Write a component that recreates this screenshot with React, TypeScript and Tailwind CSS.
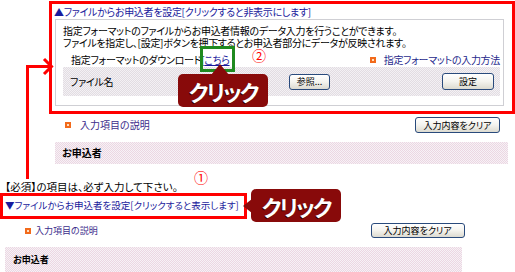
import React from "react";

const Bullet = () => (
  <span className="inline-flex h-[6px] w-[6px] shrink-0 items-center justify-center bg-[#f26a1b]">
    <span className="h-[2px] w-[2px] bg-[#ffe0c0]" />
  </span>
);

const XpButton = ({ label, className }: { label: string; className: string }) => (
  <button
    className={`flex items-center justify-center rounded-[3px] border border-[#294a7c] bg-linear-to-b from-white via-[#f4f3ee] to-[#dcdad0] tracking-normal text-black ${className}`}
  >
    {label}
  </button>
);

const ClickBadge = ({ className }: { className: string }) => (
  <div
    className={`absolute flex h-[33px] w-[90px] items-center justify-center rounded-[5px] bg-[#880a0a] text-[22px] font-bold tracking-[-2px] text-white [text-shadow:-1px_1px_0_#3a0000] ${className}`}
  >
    クリック
  </div>
);

export default function App() {
  return (
    <div className="relative h-[272px] w-[515px] overflow-hidden bg-white font-['Noto_Sans_CJK_JP','Noto_Sans',sans-serif] text-[10px] leading-none text-black [font-feature-settings:'palt']">
      {/* expanded panel */}
      <div className="ml-[49px] mt-[1px] h-[113px] w-[466px] border-[3px] border-[#ff0000] tracking-[-0.3px]">
        <div className="flex h-[15px] items-center pl-[2px] text-[#1a1a9c]">
          ▲ファイルからお申込者を設定[クリックすると非表示にします]
        </div>
        <div className="ml-[3px] mr-[8px] h-[87px] border border-[#cfcfd4] pl-[7px] pr-[3px] pt-[5px]">
          <p className="leading-[12px]">
            指定フォーマットのファイルからお申込者情報のデータ入力を行うことができます。
          </p>
          <p className="leading-[12px]">
            ファイルを指定し、[設定]ボタンを押下するとお申込者部分にデータが反映されます。
          </p>
          <div className="mt-[5px] flex h-[12px] items-center justify-between pl-[8px]">
            <span>
              指定フォーマットのダウンロード[
              <span className="relative">
                <a className="text-[#1a1a9c] underline">こちら</a>
                <span className="absolute -bottom-[5px] -left-[4px] -right-[5px] -top-[6px] border-[3px] border-[#1f8a1f]" />
              </span>
            </span>
            <span className="flex items-center gap-[8px] text-[#1f2a8c]">
              <Bullet />
              指定フォーマットの入力方法
            </span>
          </div>
          <div className="mt-[1px] flex h-[29px] items-center bg-[repeating-conic-gradient(#e2dce2_0_25%,#f3f1f4_0_50%)] bg-[length:2px_2px] pl-[7px] pr-[6px]">
            <span className="w-[219px]">ファイル名</span>
            <XpButton label="参照..." className="h-[16px] w-[41px] text-[9px]" />
            <XpButton label="設定" className="ml-auto h-[17px] w-[52px] text-[9px]" />
          </div>
        </div>
      </div>

      <div className="mt-[3px] flex h-[16px] items-center pl-[65px] pr-[15px]">
        <Bullet />
        <span className="ml-[9px] text-[#3c2d8c]">入力項目の説明</span>
        <XpButton label="入力内容をクリア" className="ml-auto h-[16px] w-[85px] text-[9px]" />
      </div>
      <div className="ml-[55px] mt-[9px] flex h-[22px] w-[453px] items-center bg-[repeating-conic-gradient(#ecd6e2_0_25%,#f6f2f6_0_50%)] bg-[length:2px_2px] pl-[7px] font-bold">
        お申込者
      </div>

      {/* collapsed panel */}
      <p className="mt-[17px] h-[12px] pl-[5px] text-[10.5px] leading-[12px]">【必須】の項目は、必ず入力して下さい。</p>
      <div className="flex h-[26px] w-[247px] items-center border-[3px] border-[#ff0000] pl-[2px] text-[9.5px] text-[#1a1a9c]">
        ▼ファイルからお申込者を設定[クリックすると表示します]
      </div>
      <div className="mt-[4px] flex h-[15px] items-center pl-[25px]">
        <Bullet />
        <span className="ml-[4px] text-[9px] text-[#3c2d8c]">入力項目の説明</span>
        <XpButton label="入力内容をクリア" className="ml-[273px] h-[15px] w-[94px] text-[9px]" />
      </div>
      <div className="ml-[5px] mt-[9px] flex h-[25px] w-[457px] items-center bg-[repeating-conic-gradient(#ecd6e2_0_25%,#f6f2f6_0_50%)] bg-[length:2px_2px] pl-[8px] text-[9px] font-bold">
        お申込者
      </div>

      {/* annotations */}
      <svg className="absolute left-[20px] top-[56px]" width="36" height="126" viewBox="0 0 36 126">
        <path d="M7.5 123 V10.5 H29" fill="none" stroke="#ff0000" strokeWidth="3" />
        <path d="M24 3 L31.5 10.5 L24 18" fill="none" stroke="#ff0000" strokeWidth="3" />
      </svg>
      <span className="absolute left-[252px] top-[48px] text-[14px] leading-none text-[#ff0000]">②</span>
      <span className="absolute left-[194px] top-[170px] text-[14px] leading-none text-[#ff0000]">①</span>

      <ClickBadge className="left-[178px] top-[74px]" />
      <svg className="absolute left-[211px] top-[64px]" width="18" height="11" viewBox="0 0 18 11">
        <path d="M9 0 L18 11 H0 Z" fill="#880a0a" />
      </svg>

      <ClickBadge className="left-[251px] top-[189px]" />
      <svg className="absolute left-[243px] top-[199px]" width="9" height="14" viewBox="0 0 9 14">
        <path d="M0 7 L9 0 V14 Z" fill="#880a0a" />
      </svg>
    </div>
  );
}
